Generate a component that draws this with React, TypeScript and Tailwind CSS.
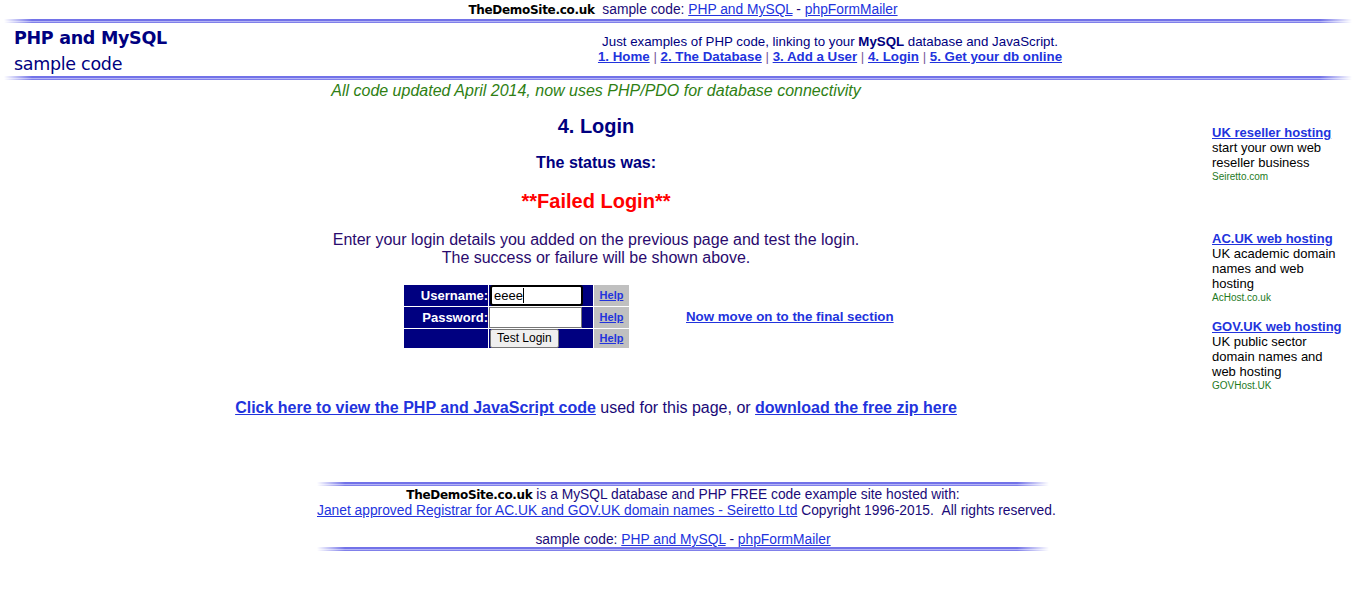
import React from "react";

const arial = "font-['Liberation_Sans',Arial,sans-serif]";
const comic = "font-['DejaVu_Sans',sans-serif]";
const link = "text-[#2233dd] underline";

function Rule({ className = "" }: { className?: string }) {
  return (
    <div
      className={
        "h-[4px] [mask-image:linear-gradient(to_right,transparent,#000_28px,#000_calc(100%_-_32px),transparent)] bg-[linear-gradient(to_bottom,#7272e8_0px,#7272e8_2px,#b4b4f6_2px,#b4b4f6_3px,#8080ea_3px,#8080ea_4px)] " +
        className
      }
    />
  );
}

function Sep() {
  return <span className="text-[#7a5a9a] font-normal no-underline"> | </span>;
}

function Ad({
  title,
  lines,
  host,
  className = "",
}: {
  title: string;
  lines: string[];
  host: string;
  className?: string;
}) {
  return (
    <div className={"text-[13px] leading-[15px] " + className}>
      <a href="#" className={link + " font-bold whitespace-nowrap"}>
        {title}
      </a>
      {lines.map((l) => (
        <div key={l} className="text-black">
          {l}
        </div>
      ))}
      <div className="text-[10px] leading-[13px] text-[#1e7a1e]">{host}</div>
    </div>
  );
}

export default function App() {
  return (
    <div className={arial + " bg-white min-h-[613px] text-[#1a0a78] w-[1366px]"}>
      {/* top bar */}
      <div className="pt-[2px] h-[18px] text-center text-[13.8px] leading-[16px] whitespace-nowrap">
        <span className={comic + " font-bold text-black text-[12px] tracking-[-0.3px]"}>TheDemoSite.co.uk</span>
        <span>{"\u00a0\u00a0"}sample code: </span>
        <a href="#" className={link}>PHP and MySQL</a>
        <span> - </span>
        <a href="#" className={link}>phpFormMailer</a>
      </div>
      <Rule className="mt-[1px] ml-[4px] mr-[14px]" />

      {/* header */}
      <div className="flex h-[53px]">
        <div className={"w-[294px] pl-[14px] text-[#000080] " + comic}>
          <div className="text-[17.5px] font-bold leading-[22px] mt-[4px] tracking-[-0.3px]">PHP and MySQL</div>
          <div className="text-[17.5px] leading-[22px] mt-[4px] tracking-[-0.3px]">sample code</div>
        </div>
        <div className="flex-1 text-center text-[13.3px] leading-[15px] pt-[11px]">
          <div className="text-[#000080]">
            Just examples of PHP code, linking to your <b>MySQL</b> database and JavaScript.
          </div>
          <div className="font-bold">
            <a href="#" className={link}>1. Home</a>
            <Sep />
            <a href="#" className={link}>2. The Database</a>
            <Sep />
            <a href="#" className={link}>3. Add a User</a>
            <Sep />
            <a href="#" className={link}>4. Login</a>
            <Sep />
            <a href="#" className={link}>5. Get your db online</a>
          </div>
        </div>
      </div>
      <Rule className="ml-[4px] mr-[14px]" />

      {/* body */}
      <div className="flex">
        <div className="w-[1192px] flex flex-col">
          <div className="text-center italic text-[16px] leading-[18px] text-[#2f7f14] mt-[2px]">
            All code updated April 2014, now uses PHP/PDO for database connectivity
          </div>
          <div className="text-center font-bold text-[20px] leading-[24px] text-[#000080] mt-[14px]">4. Login</div>
          <div className="text-center font-bold text-[16px] leading-[18px] text-[#000080] mt-[16px]">The status was:</div>
          <div className="text-center font-bold text-[20px] leading-[24px] text-[#ff0000] mt-[17px]">**Failed Login**</div>
          <div className="text-center text-[16px] leading-[18px] text-[#2a0a6e] mt-[18px]">
            Enter your login details you added on the previous page and test the login.
            <br />
            The success or failure will be shown above.
          </div>

          <div className="flex items-center pl-[404px] mt-[18px]">
            <div className="grid grid-cols-[84px_104px_35px] grid-rows-[21px_21px_19px] gap-px bg-white">
              <div className="bg-[#000080] text-white font-bold text-[13px] flex items-center justify-end">Username:</div>
              <div className="bg-[#000080] flex items-center">
                <div className="ml-[1px] w-[93px] h-[21px] bg-white border-2 border-black rounded-[3px] flex items-center pl-[2px] text-[13px] text-black">
                  eeee<span className="inline-block w-px h-[15px] bg-black" />
                </div>
              </div>
              <div className="bg-[#c0c0c0] flex items-center justify-center">
                <a href="#" className={link + " text-[11px] font-bold"}>Help</a>
              </div>

              <div className="bg-[#000080] text-white font-bold text-[13px] flex items-center justify-end">Password:</div>
              <div className="bg-[#000080] flex items-center">
                <div className="w-[93px] h-[21px] bg-white border border-[#767676]" />
              </div>
              <div className="bg-[#c0c0c0] flex items-center justify-center">
                <a href="#" className={link + " text-[11px] font-bold"}>Help</a>
              </div>

              <div className="bg-[#000080]" />
              <div className="bg-[#000080] flex items-center">
                <button className="ml-[1px] h-[19px] px-[6px] bg-[#efefef] border border-[#767676] rounded-[2px] text-[12px] leading-[15px] text-black">
                  Test Login
                </button>
              </div>
              <div className="bg-[#c0c0c0] flex items-center justify-center">
                <a href="#" className={link + " text-[11px] font-bold"}>Help</a>
              </div>
            </div>
            <a href="#" className={link + " font-bold text-[13.3px] ml-[57px]"}>
              Now move on to the final section
            </a>
          </div>

          <div className="text-center text-[16px] leading-[18px] mt-[51px]">
            <a href="#" className={link + " font-bold"}>Click here to view the PHP and JavaScript code</a>
            <span> used for this page, or </span>
            <a href="#" className={link + " font-bold"}>download the free zip here</a>
          </div>
        </div>

        <div className="pl-[20px] pt-[45px] w-[174px]">
          <div className="w-[134px]">
            <Ad title="UK reseller hosting" lines={["start your own web", "reseller business"]} host="Seiretto.com" />
            <Ad
              className="mt-[48px]"
              title="AC.UK web hosting"
              lines={["UK academic domain", "names and web", "hosting"]}
              host="AcHost.co.uk"
            />
            <Ad
              className="mt-[15px]"
              title="GOV.UK web hosting"
              lines={["UK public sector", "domain names and", "web hosting"]}
              host="GOVHost.UK"
            />
          </div>
        </div>
      </div>

      {/* footer */}
      <div className="w-[732px] mx-auto mt-[65px] text-center text-[13.8px] leading-[16px]">
        <Rule />
        <div className="mt-[1px] whitespace-nowrap">
          <span className={comic + " font-bold text-black text-[12px] tracking-[-0.3px]"}>TheDemoSite.co.uk</span>
          <span> is a MySQL database and PHP FREE code example site hosted with:</span>
        </div>
        <div className="whitespace-nowrap">
          <a href="#" className={link}>Janet approved Registrar for AC.UK and GOV.UK domain names - Seiretto Ltd</a>
          <span> Copyright 1996-2015.{"\u00a0\u00a0"}All rights reserved.</span>
        </div>
        <div className="mt-[13px] leading-[15px]">
          <span>sample code: </span>
          <a href="#" className={link}>PHP and MySQL</a>
          <span> - </span>
          <a href="#" className={link}>phpFormMailer</a>
        </div>
        <Rule />
      </div>
    </div>
  );
}
